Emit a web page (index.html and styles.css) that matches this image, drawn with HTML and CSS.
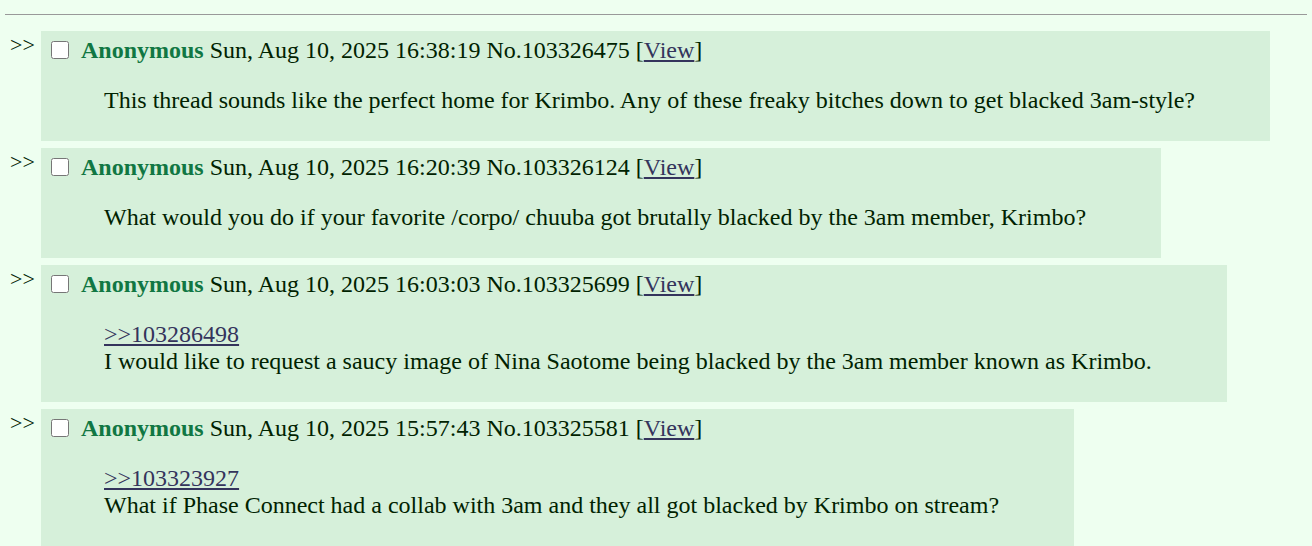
FILE: index.html
```html
<!DOCTYPE html>
<html lang="en">
<head>
    <meta charset="UTF-8">
    <title>Search results</title>
    <link rel="stylesheet" href="styles.css">
</head>
<body>
    <hr class="divider">

    <div class="post">
        <div class="doubledash">&gt;&gt;</div>
        <div class="reply">
            <div class="post-info">
                <input type="checkbox" class="post-check">
                <span class="name">Anonymous</span>
                <span class="date">Sun, Aug 10, 2025 16:38:19</span>
                <span class="post-no">No.103326475</span>
                [<a href="#" class="view-link">View</a>]
            </div>
            <blockquote class="comment">This thread sounds like the perfect home for Krimbo. Any of these freaky bitches down to get blacked 3am-style?</blockquote>
        </div>
    </div>

    <div class="post">
        <div class="doubledash">&gt;&gt;</div>
        <div class="reply">
            <div class="post-info">
                <input type="checkbox" class="post-check">
                <span class="name">Anonymous</span>
                <span class="date">Sun, Aug 10, 2025 16:20:39</span>
                <span class="post-no">No.103326124</span>
                [<a href="#" class="view-link">View</a>]
            </div>
            <blockquote class="comment">What would you do if your favorite /corpo/ chuuba got brutally blacked by the 3am member, Krimbo?</blockquote>
        </div>
    </div>

    <div class="post">
        <div class="doubledash">&gt;&gt;</div>
        <div class="reply">
            <div class="post-info">
                <input type="checkbox" class="post-check">
                <span class="name">Anonymous</span>
                <span class="date">Sun, Aug 10, 2025 16:03:03</span>
                <span class="post-no">No.103325699</span>
                [<a href="#" class="view-link">View</a>]
            </div>
            <blockquote class="comment"><a href="#" class="quotelink">&gt;&gt;103286498</a><br>I would like to request a saucy image of Nina Saotome being blacked by the 3am member known as Krimbo.</blockquote>
        </div>
    </div>

    <div class="post">
        <div class="doubledash">&gt;&gt;</div>
        <div class="reply">
            <div class="post-info">
                <input type="checkbox" class="post-check">
                <span class="name">Anonymous</span>
                <span class="date">Sun, Aug 10, 2025 15:57:43</span>
                <span class="post-no">No.103325581</span>
                [<a href="#" class="view-link">View</a>]
            </div>
            <blockquote class="comment"><a href="#" class="quotelink">&gt;&gt;103323927</a><br>What if Phase Connect had a collab with 3am and they all got blacked by Krimbo on stream?</blockquote>
        </div>
    </div>
</body>
</html>
```

FILE: styles.css
```css
body {
    margin: 0 5px;
    background: #eefff0;
    color: #002200;
    font-family: "Liberation Serif", "Times New Roman", serif;
    font-size: 24px;
}

.divider {
    margin: 14px 0 16px;
    border: none;
    border-top: 1px solid #999999;
    height: 0;
}

.post {
    display: flex;
    align-items: flex-start;
    margin-bottom: 7px;
}

.doubledash {
    width: 31px;
    padding: 1px 0 0 5px;
    font-size: 22px;
    line-height: 26px;
}

.reply {
    background: #d6f0da;
    padding: 6px 15px 3px 3px;
}

.post-info {
    line-height: 27px;
    white-space: nowrap;
}

.post-check {
    width: 18px;
    height: 18px;
    margin: 0 6px 0 7px;
    vertical-align: -1px;
}

.name {
    color: #117743;
    font-weight: bold;
}

a {
    color: #34345c;
}

.comment {
    margin: 23px 60px 24px 60px;
    line-height: 27px;
}
```
